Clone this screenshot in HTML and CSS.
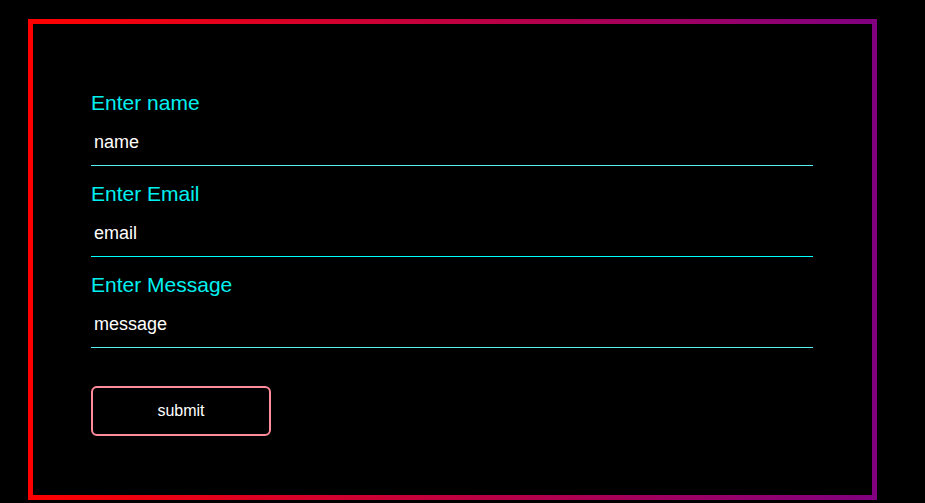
FILE: index.html
```html
<!DOCTYPE html>
<html>
<head>
<meta charset="utf-8">
<link rel="stylesheet" href="styles.css">
</head>
<body>
<form class="card">
  <div class="field">
    <label class="label">Enter name</label>
    <input class="input" type="text" value="name">
  </div>
  <div class="field">
    <label class="label">Enter Email</label>
    <input class="input" type="text" value="email" autofocus onfocus="this.setSelectionRange(5,5)">
  </div>
  <div class="field">
    <label class="label">Enter Message</label>
    <input class="input" type="text" value="message">
  </div>
  <button class="submit" type="button">submit</button>
</form>
</body>
</html>
```
FILE: styles.css
```css
html, body {
  margin: 0;
  background: #000;
}
body {
  padding: 19px 48px 3px 28px;
  font-family: "Liberation Sans", Arial, sans-serif;
}
.card {
  width: 849px;
  height: 481px;
  box-sizing: border-box;
  border: 5px solid;
  border-image: linear-gradient(to right, #ff0000, #800080) 1;
  padding: 67px 58px 0 58px;
}
.field {
  display: flex;
  flex-direction: column;
  width: 722px;
  margin-bottom: 16px;
}
.label {
  color: #00f0f0;
  font-size: 21px;
  line-height: 24px;
  margin-bottom: 8px;
}
.input {
  height: 43px;
  box-sizing: border-box;
  background: transparent;
  border: none;
  border-bottom: 1px solid #55f0f0;
  outline: none;
  color: #fff;
  caret-color: #fff;
  font-family: "Liberation Sans", Arial, sans-serif;
  font-size: 18px;
  padding: 0 3px 4px;
  margin: 0;
}
.input:focus {
  border-bottom-color: #00ffff;
}
.submit {
  display: block;
  margin-top: 38px;
  width: 180px;
  height: 50px;
  background: transparent;
  border: 2px solid #ff8c9c;
  border-radius: 6px;
  color: #fff;
  font-family: "Liberation Sans", Arial, sans-serif;
  font-size: 16px;
}
```
